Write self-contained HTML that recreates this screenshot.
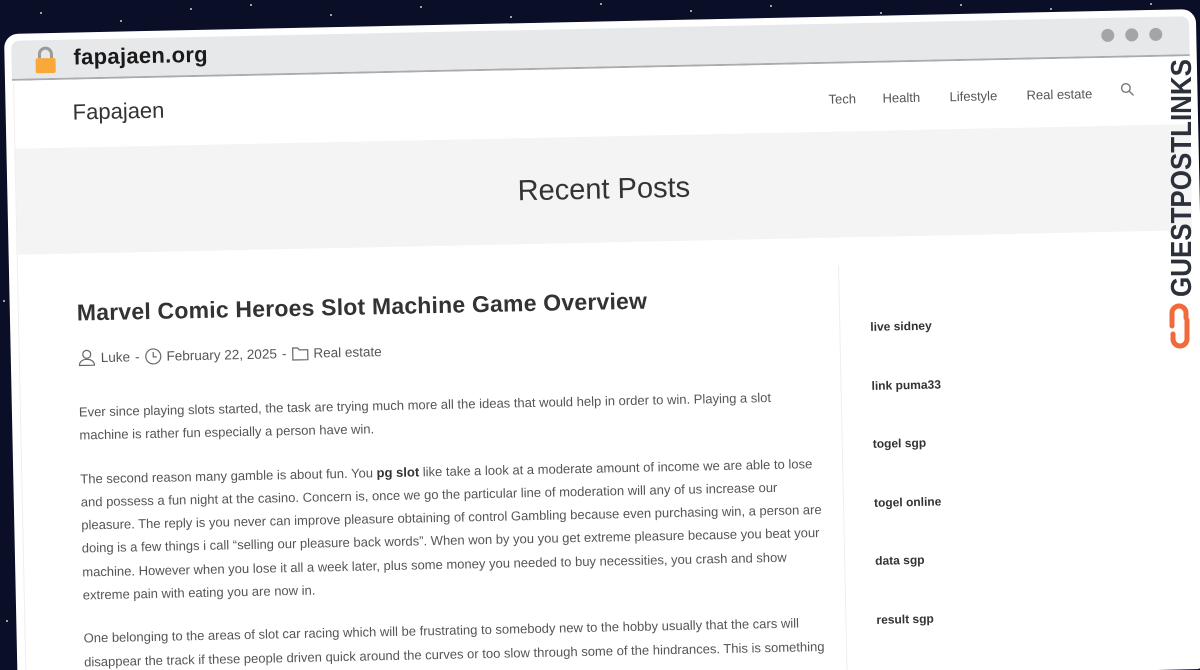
<!DOCTYPE html>
<html><head><meta charset="utf-8"><style>
*{margin:0;padding:0;box-sizing:border-box}
html,body{width:1200px;height:670px;overflow:hidden;background:#0a0e26;font-family:"Liberation Sans",sans-serif}
.wrap{position:fixed;left:0;top:0;width:1200px;height:670px;overflow:hidden}
.star{position:absolute;width:2px;height:2px;background:#fff;border-radius:50%;opacity:.8}
.win{position:absolute;left:4px;top:34px;width:1192px;height:660px;background:#fff;border-radius:14px;transform-origin:0 0;transform:rotate(-1.2deg);overflow:hidden}
.tb{position:absolute;left:7px;right:7px;top:7px;height:40px;background:#e7e8ea;border-radius:8px 8px 0 0;border-bottom:2px solid #a9abae}
.url{position:absolute;left:62px;top:5px;font-size:22px;font-weight:bold;color:#1a1a1a;letter-spacing:.3px}
.dot{position:absolute;top:11px;width:13px;height:13px;border-radius:50%;background:#a4a5a8}
.page{position:absolute;left:8px;right:8px;top:49px;bottom:0;border-left:1px solid #eee;overflow:hidden}
.logo{position:absolute;left:58px;top:18px;font-size:22px;color:#333}
.nav{position:absolute;top:26px;font-size:13px;color:#555}
.band{position:absolute;left:0;right:0;top:66px;height:106px;background:#f4f4f5}
.band h1{font-weight:normal;font-size:29px;color:#333;text-align:center;line-height:106px}
.main{position:absolute;left:58px;top:218px;width:742px;color:#555;font-size:13px}
.main h2{font-size:23px;color:#333;font-weight:bold;letter-spacing:.2px}
.meta{margin-top:22px;font-size:13.5px;color:#555;display:flex;align-items:center;gap:5px}
.main p{margin-top:20px;line-height:23.3px}
.meta+p{margin-top:34px}
.divider{position:absolute;left:820px;top:200px;width:1px;height:500px;background:#eee}
.side{position:absolute;left:851px;top:255px}
.side a{display:block;height:58.6px;font-size:12px;font-weight:bold;color:#333;text-decoration:none}
.gpl{position:absolute;left:1163px;top:52px;width:32px;height:300px}
</style></head><body><div class="wrap">
<div class="star" style="left:40px;top:12px"></div><div class="star" style="left:120px;top:20px"></div><div class="star" style="left:190px;top:8px"></div><div class="star" style="left:250px;top:4px"></div><div class="star" style="left:330px;top:14px"></div><div class="star" style="left:420px;top:6px"></div><div class="star" style="left:510px;top:16px"></div><div class="star" style="left:600px;top:3px"></div><div class="star" style="left:690px;top:10px"></div><div class="star" style="left:770px;top:5px"></div><div class="star" style="left:880px;top:12px"></div><div class="star" style="left:960px;top:4px"></div><div class="star" style="left:1050px;top:8px"></div><div class="star" style="left:1150px;top:3px"></div><div class="star" style="left:6px;top:620px"></div><div class="star" style="left:3px;top:300px"></div>
<div class="win">
 <div class="tb">
  <svg style="position:absolute;left:22px;top:6px" width="24" height="28" viewBox="0 0 24 28"><path d="M6 12V8a6 6 0 0 1 12 0v4" fill="none" stroke="#9a9a9a" stroke-width="3"/><rect x="2" y="12" width="20" height="15" rx="2" fill="#f9a93a"/></svg>
  <div class="url">fapajaen.org</div>
  <div class="dot" style="left:1090px"></div><div class="dot" style="left:1114px"></div><div class="dot" style="left:1138px"></div>
 </div>
 <div class="page">
  <div class="logo">Fapajaen</div>
  <div class="nav" style="left:814px">Tech</div>
  <div class="nav" style="left:868px">Health</div>
  <div class="nav" style="left:935px">Lifestyle</div>
  <div class="nav" style="left:1012px">Real estate</div>
  <svg style="position:absolute;left:1106px;top:23px" width="14" height="14" viewBox="0 0 14 14"><circle cx="5.5" cy="5.5" r="4.3" fill="none" stroke="#777" stroke-width="1.4"/><path d="M8.7 8.7L13 13" stroke="#777" stroke-width="1.4"/></svg>
  <div class="band"><h1>Recent Posts</h1></div>
  <div class="divider"></div>
  <div class="main">
   <h2>Marvel Comic Heroes Slot Machine Game Overview</h2>
   <div class="meta">
    <svg width="18" height="18" viewBox="0 0 18 18" fill="none" stroke="#666" stroke-width="1.2"><circle cx="9" cy="6" r="4"/><path d="M1.5 17c0-4 3.5-6 7.5-6s7.5 2 7.5 6z"/></svg> Luke <span>-</span>
    <svg width="17" height="17" viewBox="0 0 17 17" fill="none" stroke="#666" stroke-width="1.2"><circle cx="8.5" cy="8.5" r="7.5"/><path d="M8.5 4v5h3.5"/></svg> February 22, 2025 <span>-</span>
    <svg width="17" height="15" viewBox="0 0 17 15" fill="none" stroke="#666" stroke-width="1.2"><path d="M1 2h5l1.5 2H16v10H1z"/></svg> Real estate
   </div>
   <p>Ever since playing slots started, the task are trying much more all the ideas that would help in order to win. Playing a slot machine is rather fun especially a person have win.</p>
   <p>The second reason many gamble is about fun. You <b style="color:#333">pg slot</b> like take a look at a moderate amount of income we are able to lose and possess a fun night at the casino. Concern is, once we go the particular line of moderation will any of us increase our pleasure. The reply is you never can improve pleasure obtaining of control Gambling because even purchasing win, a person are doing is a few things i call “selling our pleasure back words”. When won by you you get extreme pleasure because you beat your machine. However when you lose it all a week later, plus some money you needed to buy necessities, you crash and show extreme pain with eating you are now in.</p>
   <p>One belonging to the areas of slot car racing which will be frustrating to somebody new to the hobby usually that the cars will disappear the track if these people driven quick around the curves or too slow through some of the hindrances. This is something you can get the concept of pretty quickly.</p>
  </div>
  <div class="side"><a>live sidney</a><a>link puma33</a><a>togel sgp</a><a>togel online</a><a>data sgp</a><a>result sgp</a></div>
 </div>
</div>
<svg class="gpl" viewBox="0 0 32 300">
 <text transform="translate(28,245) rotate(-90)" font-family="Liberation Sans" font-weight="bold" font-size="29" fill="#2b303b" textLength="238" lengthAdjust="spacingAndGlyphs">GUESTPOSTLINKS</text>
 <g fill="none" stroke="#f06a3c" stroke-width="5" stroke-linecap="round"><path d="M9 274V261a7 7 0 0 1 14 0v5"/><path d="M24 268v19a7 7 0 0 1 -14 0v-5"/></g>
</svg>
</div></body></html>
